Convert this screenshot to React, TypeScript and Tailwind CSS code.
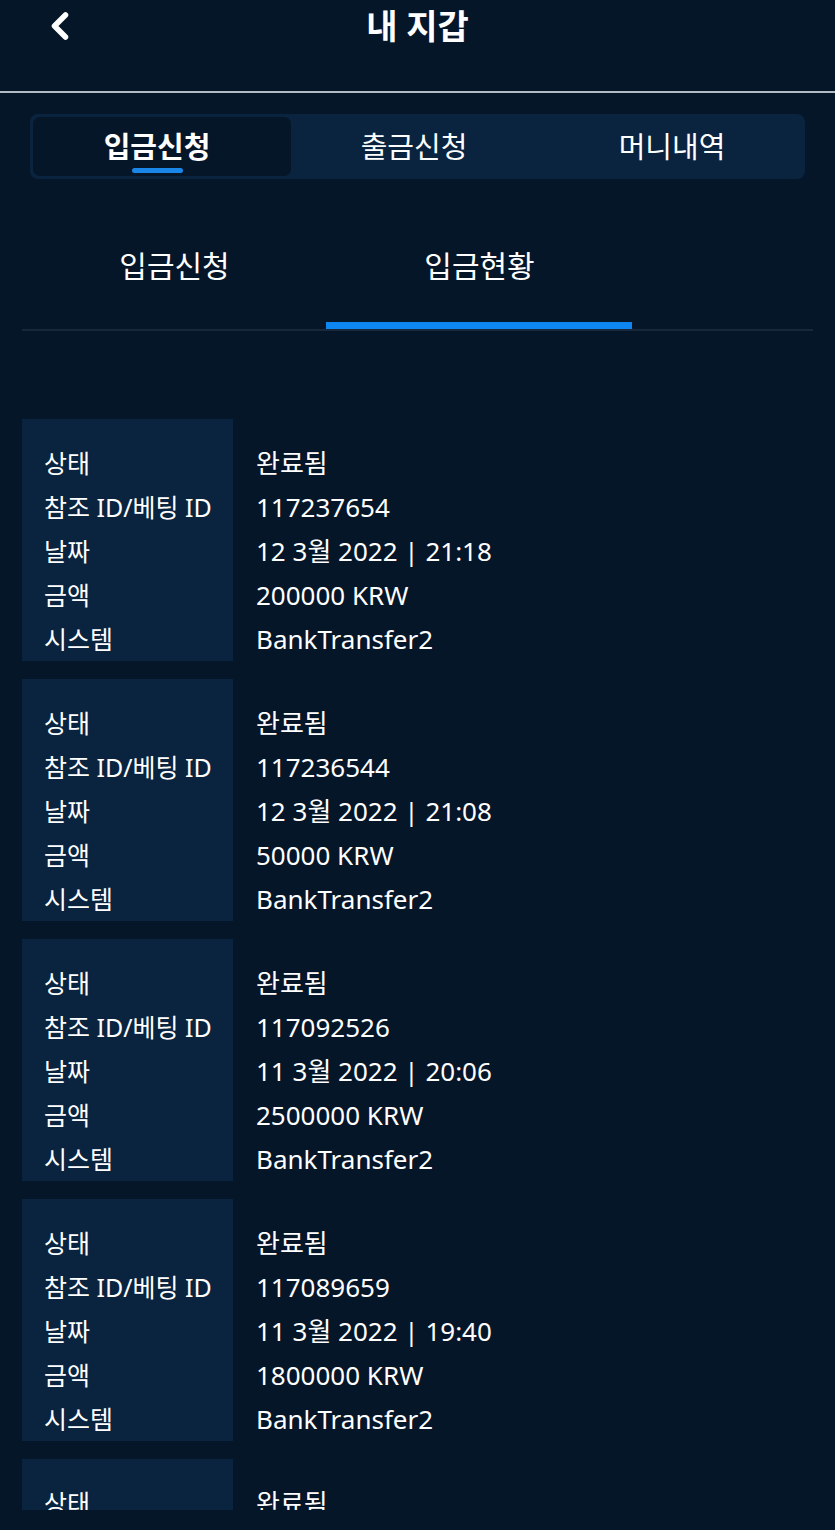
import { ChevronLeft } from 'lucide-react'

const deposits = [
  { status: '완료됨', id: '117237654', date: '12 3월 2022 | 21:18', amount: '200000 KRW', system: 'BankTransfer2' },
  { status: '완료됨', id: '117236544', date: '12 3월 2022 | 21:08', amount: '50000 KRW', system: 'BankTransfer2' },
  { status: '완료됨', id: '117092526', date: '11 3월 2022 | 20:06', amount: '2500000 KRW', system: 'BankTransfer2' },
  { status: '완료됨', id: '117089659', date: '11 3월 2022 | 19:40', amount: '1800000 KRW', system: 'BankTransfer2' },
  { status: '완료됨', id: '117085120', date: '11 3월 2022 | 19:02', amount: '300000 KRW', system: 'BankTransfer2' },
]

const labels = ['상태', '참조 ID/베팅 ID', '날짜', '금액', '시스템']

function DepositCard({ d }: { d: (typeof deposits)[number] }) {
  const values = [d.status, d.id, d.date, d.amount, d.system]
  return (
    <div className="flex">
      <div className="w-[211px] shrink-0 bg-[#0a2440] pt-[22px] pl-[22px] text-[25px]">
        {labels.map((l) => (
          <div key={l} className="h-[44px] leading-[44px] whitespace-nowrap">{l}</div>
        ))}
      </div>
      <div className="flex-1 pt-[22px] pl-[23px] text-[26px]">
        {values.map((v, i) => (
          <div key={i} className="h-[44px] leading-[44px] whitespace-nowrap">{v}</div>
        ))}
      </div>
    </div>
  )
}

function App() {
  return (
    <div
      className="h-[1530px] w-full bg-[#061629] text-white overflow-hidden flex flex-col"
      style={{ fontFamily: '"Noto Sans", "Noto Sans CJK KR", sans-serif' }}
    >
      {/* Header */}
      <header className="relative h-[93px] shrink-0 border-b-2 border-[#b3bcc5]">
        <button className="absolute left-[38px] top-[4px] text-white">
          <ChevronLeft size={44} strokeWidth={3} />
        </button>
        <h1 className="text-center text-[34px] font-bold leading-[52px]">내 지갑</h1>
      </header>

      {/* Main tabs */}
      <div className="px-[30px] pt-[21px] shrink-0">
        <div className="flex h-[65px] rounded-[8px] bg-[#0a2440] p-[3px] pr-[2px]">
          <div className="relative flex w-[259px] items-center justify-center rounded-[7px] bg-[#061629] pr-[10px] text-[29px] font-bold">
            입금신청
            <span className="absolute bottom-[3px] left-[99px] h-[5px] w-[51px] rounded-full bg-[#1a86e8]" />
          </div>
          <div className="flex w-[257px] items-center justify-center pr-[10px] text-[29px]">출금신청</div>
          <div className="flex w-[257px] items-center justify-center pr-[6px] text-[29px]">머니내역</div>
        </div>
      </div>

      {/* Sub tabs */}
      <div className="mx-[22px] mt-[22px] flex border-b-2 border-[#17283a] shrink-0">
        <div className="flex h-[128px] w-[305px] items-center justify-center text-[30px]">입금신청</div>
        <div className="relative flex h-[128px] w-[305px] items-center justify-center text-[30px]">
          입금현황
          <span className="absolute bottom-0 left-[-1px] h-[7px] w-[306px] bg-[#0d86f2]" />
        </div>
      </div>

      {/* List */}
      <div className="mt-[88px] h-[1091px] shrink-0 overflow-hidden px-[22px]">
        <div className="flex flex-col gap-[18px]">
          {deposits.map((d) => (
            <DepositCard key={d.id} d={d} />
          ))}
        </div>
      </div>
    </div>
  )
}

export default App
